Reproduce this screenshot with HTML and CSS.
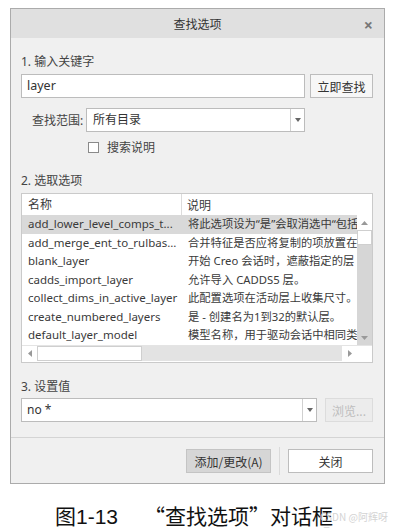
FILE: index.html
```html
<!DOCTYPE html>
<html lang="zh-CN">
<head>
    <meta charset="UTF-8">
    <title>查找选项</title>
    <link rel="stylesheet" href="styles.css">
</head>
<body>

<div class="dialog">
    <div class="titlebar">
        <span class="title">查找选项</span>
        <span class="close">&times;</span>
    </div>

    <div class="content">
        <div class="section-label">1. 输入关键字</div>
        <div class="keyword-row">
            <div class="textbox">layer</div>
            <button class="btn" type="button">立即查找</button>
        </div>

        <div class="scope-row">
            <span class="scope-label">查找范围:</span>
            <div class="combo scope-combo">
                <span class="combo-text">所有目录</span>
                <span class="combo-arrow"><svg width="6" height="4" viewBox="0 0 6 4"><path d="M0 0h6L3 4z" fill="#666"/></svg></span>
            </div>
        </div>

        <label class="check-row">
            <span class="checkbox"></span>
            <span>搜索说明</span>
        </label>

        <div class="section-label gap-lg">2. 选取选项</div>
        <div class="list">
            <div class="list-head">
                <span class="col-name">名称</span>
                <span class="col-desc">说明</span>
            </div>
            <div class="list-body">
                <div class="rows">
                    <div class="row selected"><span class="col-name">add_lower_level_comps_t...</span><span class="col-desc">将此选项设为“是”会取消选中“包括</span></div>
                    <div class="row"><span class="col-name">add_merge_ent_to_rulbas...</span><span class="col-desc">合并特征是否应将复制的项放置在层</span></div>
                    <div class="row"><span class="col-name">blank_layer</span><span class="col-desc">开始 Creo 会话时，遮蔽指定的层</span></div>
                    <div class="row"><span class="col-name">cadds_import_layer</span><span class="col-desc">允许导入 CADDS5 层。</span></div>
                    <div class="row"><span class="col-name">collect_dims_in_active_layer</span><span class="col-desc">此配置选项在活动层上收集尺寸。</span></div>
                    <div class="row"><span class="col-name">create_numbered_layers</span><span class="col-desc">是 - 创建名为1到32的默认层。</span></div>
                    <div class="row"><span class="col-name">default_layer_model</span><span class="col-desc">模型名称，用于驱动会话中相同类型</span></div>
                </div>
                <div class="vscroll">
                    <span class="sb-btn"><svg width="7" height="4" viewBox="0 0 7 4"><path d="M0 4L3.5 0L7 4z" fill="#999"/></svg></span>
                    <span class="vthumb"></span>
                    <span class="vtrack"></span>
                    <span class="sb-btn down"><svg width="7" height="4" viewBox="0 0 7 4"><path d="M0 0h7L3.5 4z" fill="#999"/></svg></span>
                </div>
            </div>
            <div class="hscroll">
                <span class="sb-btn"><svg width="4" height="7" viewBox="0 0 4 7"><path d="M4 0v7L0 3.5z" fill="#999"/></svg></span>
                <span class="hthumb"></span>
                <span class="htrack"></span>
                <span class="sb-btn"><svg width="4" height="7" viewBox="0 0 4 7"><path d="M0 0v7l4-3.5z" fill="#999"/></svg></span>
                <span class="corner"></span>
            </div>
        </div>

        <div class="section-label gap-md">3. 设置值</div>
        <div class="value-row">
            <div class="combo value-combo">
                <span class="combo-text">no *</span>
                <span class="combo-arrow"><svg width="6" height="4" viewBox="0 0 6 4"><path d="M0 0h6L3 4z" fill="#666"/></svg></span>
            </div>
            <button class="btn disabled" type="button">浏览...</button>
        </div>
    </div>

    <div class="footer">
        <button class="btn btn-default" type="button">添加/更改(A)</button>
        <span class="footer-sep"></span>
        <button class="btn btn-close" type="button">关闭</button>
    </div>
</div>

<p class="caption">图1-13<span class="caption-title">“查找选项”对话框</span></p>
<span class="watermark">CSDN @阿辉呀呀×</span>

</body>
</html>
```

FILE: styles.css
```css
* {
    box-sizing: border-box;
}

body {
    margin: 0;
    background: #fff;
    font-family: "Noto Sans", "Noto Sans CJK SC", sans-serif;
    font-size: 12px;
    color: #3a3a3a;
    position: relative;
    width: 397px;
    height: 528px;
    overflow: hidden;
}

.dialog {
    margin: 8px 0 0 10px;
    width: 375px;
    border: 1px solid #ababab;
    background: #f0f0f0;
}

.titlebar {
    height: 29px;
    background: #e0e0e0;
    display: flex;
    align-items: center;
    justify-content: center;
    position: relative;
}

.title {
    font-size: 12px;
    color: #333;
}

.close {
    position: absolute;
    right: 11px;
    top: 5px;
    font-size: 16px;
    font-weight: bold;
    color: #777;
}

.content {
    padding: 15px 11px 0 10px;
}

.section-label {
    height: 18px;
    line-height: 18px;
    color: #444;
}

.gap-lg {
    margin-top: 16px;
}

.gap-md {
    margin-top: 15px;
}

.keyword-row {
    margin-top: 3px;
    display: flex;
    gap: 5px;
    height: 24px;
}

.textbox {
    flex: 1;
    background: #fff;
    border: 1px solid #bcbcbc;
    padding: 0 5px;
    line-height: 22px;
    font-size: 12.5px;
    color: #333;
}

.btn {
    font-family: "Noto Sans CJK SC", sans-serif;
    font-size: 12px;
    color: #333;
    background: #f7f7f7;
    border: 1px solid #bdbdbd;
    padding: 0;
    height: 100%;
}

.keyword-row .btn {
    width: 63px;
}

.scope-row {
    margin-top: 10px;
    display: flex;
    align-items: center;
    height: 24px;
    padding-left: 11px;
}

.scope-label {
    width: 54px;
    color: #444;
}

.combo {
    display: flex;
    height: 100%;
    background: #fff;
    border: 1px solid #bcbcbc;
}

.combo-text {
    flex: 1;
    padding-left: 6px;
    line-height: 22px;
    color: #333;
}

.combo-arrow {
    width: 14px;
    border-left: 1px solid #d0d0d0;
    display: flex;
    align-items: center;
    justify-content: center;
}

.scope-combo {
    width: 219px;
}

.check-row {
    margin-top: 6px;
    height: 18px;
    display: flex;
    align-items: center;
    gap: 8px;
    padding-left: 67px;
    color: #444;
}

.checkbox {
    width: 11px;
    height: 11px;
    border: 1px solid #8a8a8a;
    background: #fff;
}

.list {
    margin-top: 3px;
    height: 170px;
    border: 1px solid #cacaca;
    background: #fff;
}

.list-head {
    height: 21px;
    display: flex;
    align-items: center;
}

.list-head .col-name {
    border-right: 1px solid #dcdcdc;
    height: 100%;
    line-height: 21px;
}

.col-name {
    width: 160px;
    flex: none;
    padding-left: 6px;
    white-space: nowrap;
    overflow: hidden;
}

.col-desc {
    padding-left: 5px;
    white-space: nowrap;
    overflow: hidden;
    flex: 1;
}

.list-body {
    height: 130px;
    display: flex;
}

.rows {
    flex: 1;
    overflow: hidden;
}

.row {
    height: 18.5px;
    line-height: 18.5px;
    display: flex;
    font-size: 11.5px;
    color: #3a3a3a;
}

.row .col-desc {
    padding-left: 6px;
    font-size: 11.3px;
}

.row.selected {
    background: #d9d9d9;
}

.vscroll {
    width: 15px;
    display: flex;
    flex-direction: column;
    background: #fff;
}

.sb-btn {
    width: 15px;
    height: 15px;
    flex: none;
    display: flex;
    align-items: center;
    justify-content: center;
}

.vscroll .down {
    background: #d6d6d6;
}

.vthumb {
    height: 15px;
    border: 1px solid #cfcfcf;
    background: #fff;
}

.vtrack {
    flex: 1;
    background: #d6d6d6;
}

.hscroll {
    height: 16px;
    display: flex;
    border-top: 1px solid #e4e4e4;
}

.hscroll .sb-btn {
    height: 15px;
}

.hthumb {
    width: 105px;
    border: 1px solid #cfcfcf;
    background: #fff;
}

.htrack {
    flex: 1;
    background: #e3e3e3;
}

.corner {
    width: 15px;
    background: #fff;
}

.value-row {
    margin-top: 2px;
    height: 24px;
    display: flex;
    gap: 8px;
}

.value-combo {
    width: 296px;
}

.value-combo .combo-text {
    padding-left: 5px;
}

.btn.disabled {
    flex: 1;
    color: #bdbdbd;
    background: #ececec;
    border-color: #dcdcdc;
}

.footer {
    margin-top: 15px;
    border-top: 1px solid #d4d4d4;
    padding: 11px 11px 10px 0;
    display: flex;
    justify-content: flex-end;
    align-items: center;
    height: 46px;
}

.footer .btn {
    height: 24px;
    width: 85px;
}

.btn-default {
    background: #d6d6d6;
    border-color: #c4c4c4;
}

.btn-close {
    background: #fff;
}

.footer-sep {
    width: 1px;
    height: 28px;
    background: #dadada;
    margin: 0 8px;
}

.caption {
    margin: 19px 0 0 55px;
    font-family: "Liberation Sans", "Noto Sans CJK SC", sans-serif;
    font-size: 21px;
    color: #111;
    line-height: 24px;
}

.caption-title {
    font-family: "Noto Sans CJK SC", sans-serif;
    margin-left: 26px;
}

.watermark {
    position: absolute;
    left: 320px;
    top: 509px;
    font-size: 10px;
    color: #d4d4d4;
    font-family: "Noto Sans CJK SC", sans-serif;
}
```
